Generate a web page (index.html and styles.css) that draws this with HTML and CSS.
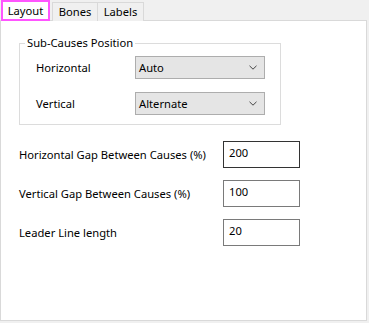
FILE: index.html
```html
<!DOCTYPE html>
<html>
<head>
<meta charset="utf-8">
<link rel="stylesheet" href="styles.css">
</head>
<body>
<div class="dialog">
  <div class="tabs">
    <div class="tab active">Layout</div>
    <div class="tab bones">Bones</div>
    <div class="tab labels">Labels</div>
  </div>
  <div class="panel">
    <fieldset class="group">
      <legend class="legend">Sub-Causes Position</legend>
      <div class="grow">
        <span class="glabel">Horizontal</span>
        <div class="select"><span>Auto</span>
          <svg class="chev" width="8" height="5" viewBox="0 0 8 5"><path d="M0.5 0.8 L4 4.2 L7.5 0.8" fill="none" stroke="#444" stroke-width="1"/></svg>
        </div>
      </div>
      <div class="grow">
        <span class="glabel">Vertical</span>
        <div class="select"><span>Alternate</span>
          <svg class="chev" width="8" height="5" viewBox="0 0 8 5"><path d="M0.5 0.8 L4 4.2 L7.5 0.8" fill="none" stroke="#444" stroke-width="1"/></svg>
        </div>
      </div>
    </fieldset>
    <div class="rows">
      <div class="row">
        <span class="rlabel">Horizontal Gap Between Causes (%)</span>
        <div class="input focus">200</div>
      </div>
      <div class="row">
        <span class="rlabel">Vertical Gap Between Causes (%)</span>
        <div class="input">100</div>
      </div>
      <div class="row">
        <span class="rlabel">Leader Line length</span>
        <div class="input">20</div>
      </div>
    </div>
  </div>
</div>
</body>
</html>
```
FILE: styles.css
```css
html, body {
  margin: 0;
  padding: 0;
  background: #f0f0f0;
  font-family: "Noto Sans", "Open Sans", sans-serif;
  font-size: 11.2px;
  color: #000;
}
.dialog {
  width: 367px;
}
.tabs {
  display: flex;
  align-items: flex-end;
  height: 21px;
  position: relative;
  z-index: 1;
  margin-bottom: -1px;
}
.tab {
  box-sizing: border-box;
  height: 19px;
  line-height: 17px;
  text-align: center;
  border: 1px solid #d9d9d9;
  border-bottom: none;
  background: #f0f0f0;
}
.tab.bones {
  width: 46px;
}
.tab.labels {
  width: 47px;
  margin-left: -1px;
}
.tab.active {
  height: 21px;
  line-height: 17px;
  margin-left: 1px;
  margin-right: 2px;
  width: 49px;
  border: 2px solid #ff55ff;
  background: #fff;
}
.panel {
  box-sizing: border-box;
  height: 301px;
  background: #fff;
  border: 1px solid #d9d9d9;
  padding: 14px 0 0 18px;
}
.group {
  box-sizing: border-box;
  width: 262px;
  margin: 0;
  padding: 5px 0 0 16px;
  height: 90px;
  border: 1px solid #dcdcdc;
}
.legend {
  padding: 0 2px 0 2px;
  margin-left: -11px;
  line-height: 16px;
}
.grow {
  display: flex;
  align-items: center;
  height: 23px;
  margin-bottom: 13px;
}
.glabel {
  width: 99px;
}
.select {
  box-sizing: border-box;
  width: 130px;
  height: 23px;
  border: 1px solid #adadad;
  background: #e5e5e5;
  display: flex;
  align-items: center;
  justify-content: space-between;
  padding: 0 7px 0 3px;
}
.chev {
  display: block;
}
.rows {
  display: flex;
  flex-direction: column;
  gap: 12px;
  margin-top: 16px;
}
.row {
  display: flex;
  align-items: center;
  height: 27px;
}
.rlabel {
  width: 204px;
}
.input {
  box-sizing: border-box;
  width: 77px;
  height: 27px;
  border: 1px solid #7a7a7a;
  padding: 3px 0 0 5px;
  line-height: 16px;
}
.input.focus {
  border-color: #333;
}
```
